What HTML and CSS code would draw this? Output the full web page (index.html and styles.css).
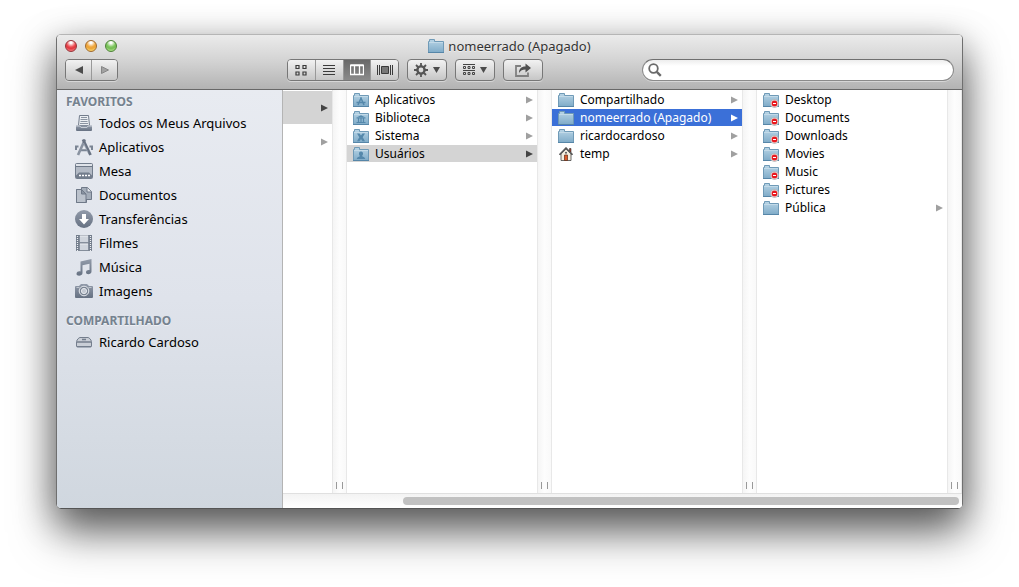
FILE: index.html
```html
<!DOCTYPE html>
<html lang="pt-BR">
<head>
<meta charset="utf-8">
<title>nomeerrado (Apagado)</title>
<link rel="stylesheet" href="styles.css">
</head>
<body>
<svg class="sprite" aria-hidden="true">
  <defs>
    <linearGradient id="folder-fill" x1="0" y1="0" x2="0" y2="1"><stop offset="0" stop-color="#b9d5e6"/><stop offset="1" stop-color="#7fabc8"/></linearGradient>
    <linearGradient id="side-fill" x1="0" y1="0" x2="0" y2="1"><stop offset="0" stop-color="#929baa"/><stop offset="1" stop-color="#667182"/></linearGradient>
    <symbol id="folder" viewBox="0 0 16 16">
      <path d="M.5 14.500V3.500H1.500V1.500H6.500V3.500H15.500V14.500Z" fill="url(#folder-fill)" stroke="#6f9ab7"/>
      <path d="M1 4.500H15" stroke="#c3dae8"/><path d="M0 14.500H16" stroke="#5686a8"/>
    </symbol>
    <symbol id="folder-apps" viewBox="0 0 16 16"><use href="#folder"/><path d="M5 13 8.300 5.500M7.700 5.500 11 13M3.500 10.500h9" fill="none" stroke="#5588ab" stroke-width="1.500"/></symbol>
    <symbol id="folder-library" viewBox="0 0 16 16"><use href="#folder"/><path d="M3.500 7.500 8 5.200 12.500 7.500Z" fill="#5588ab"/><path d="M3.500 12.500h9M3.500 8h9M5.500 8v4M8 8v4M10.500 8v4" stroke="#5588ab" stroke-width="1.200"/></symbol>
    <symbol id="folder-system" viewBox="0 0 16 16"><use href="#folder"/><path d="M4 5.500h2.500L8 7.500l1.500-2H12L9.700 9.300 12 13.200H9.500L8 11l-1.500 2.200H4l2.300-3.900Z" fill="#5588ab"/></symbol>
    <symbol id="folder-users" viewBox="0 0 16 16"><use href="#folder"/><path d="M8 5.500c1.500 0 2.200 1 2 2.500-.1 1-.6 1.400-.9 2 .1.900 2.900.8 3.100 2.900H3.800c.2-2.100 3-2 3.100-2.900-.3-.6-.8-1-.9-2-.2-1.500.5-2.500 2-2.500Z" fill="#5588ab"/></symbol>
    <symbol id="folder-denied" viewBox="0 0 16 16"><use href="#folder"/><circle cx="11.500" cy="11.500" r="4" fill="#f6f6f6" stroke="#a7a7a7" stroke-width=".8"/><circle cx="11.500" cy="11.500" r="2.900" fill="#e8191e"/><path d="M10 11.500h3" stroke="#fff" stroke-width="1.200"/></symbol>
    <symbol id="home" viewBox="0 0 16 16">
      <path d="M11.500 2.500h1.500v4h-1.500Z" fill="#a93f2b" stroke="#333" stroke-width=".6"/>
      <path d="M3 8 8 3l5 5v6.500H3Z" fill="#f6efe0" stroke="#444" stroke-width=".8"/>
      <path d="M1.500 8.700 8 2.200l6.500 6.500" fill="none" stroke="#333" stroke-width="1.600"/><path d="M2 8.500 8 2.500l6 6" fill="none" stroke="#ccc" stroke-width=".5"/>
      <path d="M6.500 9h3v5.500h-3Z" fill="#dd5b2b" stroke="#5a2c18" stroke-width=".7"/><circle cx="8" cy="6.700" r="1" fill="#555"/>
    </symbol>
    <symbol id="arrow" viewBox="0 0 7 8"><path d="M0 .5 7 4 0 7.500Z" fill="currentColor"/></symbol>
    <symbol id="all-files" viewBox="0 0 18 18"><path d="M4.500 1.500h9l1 10h-11Z" fill="#eceff3" stroke="#737d8c"/><path d="M6 3.500h6M5.500 5.500h7M5.500 7.500h7M5 9.500h8" stroke="#8b94a2"/><path d="M1 11.500h16V16a1 1 0 0 1-1 1H2a1 1 0 0 1-1-1Z" fill="url(#side-fill)"/><path d="M1 12h4l1 1.500h6l1-1.500h4" fill="none" stroke="#c6ccd5"/></symbol>
    <symbol id="apps" viewBox="0 0 18 18"><path d="M1 12V8.500h2.500M17 12V8.500h-2.500M5 12.200h8" fill="none" stroke="#7b8594" stroke-width="2"/><path d="M3 17 10 1.500" stroke="#8a93a1" stroke-width="2.600"/><path d="M8 1.500 15.500 17" stroke="#697383" stroke-width="2.800"/><path d="m8.500 5 4.500 9.500" stroke="#aab2be" stroke-width=".7"/></symbol>
    <symbol id="desk" viewBox="0 0 18 18"><rect x=".5" y="1.500" width="17" height="15" rx="1" fill="#b3bac5" stroke="#727d8c"/><path d="M1 4.500h16" stroke="#6d7786"/><path d="M1 3h16" stroke="#dfe3e9" stroke-width="2"/><path d="M4 10.500h10l3 3V16H1v-2.500Z" fill="#737d8c"/><path d="M4 13.500h2m1 0h2m1 0h2m1 0h2" stroke="#fff" stroke-width="1.500"/></symbol>
    <symbol id="docs" viewBox="0 0 18 18"><path d="M1.500 3.500h6l4 4v9h-10Z" fill="#cbd0d9" stroke="#6f7988"/><path d="M6.500 1.500h6l4 4v8h-10Z" fill="#a4adb9" stroke="#6f7988"/><path d="M12 1.500v4.500h4.500" fill="#e5e8ed" stroke="#6f7988"/><path d="M1.500 3.500h5l4.500 4.500v8.500h-9.500Z" fill="#bbc2cc" stroke="#6f7988"/><path d="M6.500 3.500v4.500h4.500Z" fill="#8a94a2" stroke="#6f7988"/></symbol>
    <symbol id="download" viewBox="0 0 18 18"><circle cx="9" cy="9" r="9" fill="url(#side-fill)"/><path d="M7 4h4v5h3l-5 5.500L4 9h3Z" fill="#fff"/></symbol>
    <symbol id="film" viewBox="0 0 18 18"><rect x="1" y="1" width="16" height="16" fill="#727c8b"/><path d="M4.500 1.500h9v7h-9zM4.500 9.500h9v7h-9z" fill="#cfd4dc" stroke="#727c8b" stroke-width=".6"/><path d="M5 2h8M5 10h8" stroke="#eceef2"/><path d="M2.500 2v15M15.500 2v15" stroke="#eef0f4" stroke-width="1.200" stroke-dasharray="1 1"/></symbol>
    <symbol id="music" viewBox="0 0 18 18"><path d="M5.500 3.500 16.500 1v12.500c0 3.300-5.500 3.800-5.500.8 0-2 2-2.600 3.500-2.200V5.700L7.500 7.300V15c0 3.300-6 3.800-6 .8 0-2 2.300-2.800 4-2.300Z" fill="url(#side-fill)"/></symbol>
    <symbol id="camera" viewBox="0 0 18 18"><path d="M1 4h3l2-2h6l2 2h3a1 1 0 0 1 1 1v10a1 1 0 0 1-1 1H1a1 1 0 0 1-1-1V5a1 1 0 0 1 1-1Z" fill="url(#side-fill)"/><path d="M1.500 5.500h3M13.500 5.500h3" stroke="#c0c6cf"/><circle cx="9" cy="9" r="4.800" fill="#7b8594" stroke="#e5e8ed"/><circle cx="9" cy="9" r="2.600" fill="#c5cad3" stroke="#e5e8ed"/></symbol>
    <symbol id="computer" viewBox="0 0 18 18"><path d="M1.500 8.500C2 6.500 4 4.500 5 4.500h8c1 0 3 2 3.500 4V13a1 1 0 0 1-1 1h-13a1 1 0 0 1-1-1Z" fill="#c9ced6" stroke="#747e8d"/><path d="M2 9h14" stroke="#747e8d" stroke-width="1.500"/><path d="M2 13.500h14" stroke="#747e8d"/><path d="M7 6.500h4" stroke="#747e8d" stroke-width="1.500"/></symbol>
  </defs>
</svg>

<main class="window">
  <header class="toolbar">
    <div class="titlebar">
      <div class="lights">
        <button class="light red" aria-label="Fechar"></button>
        <button class="light amber" aria-label="Minimizar"></button>
        <button class="light green" aria-label="Ampliar"></button>
      </div>
      <h1 class="title"><svg class="icon"><use href="#folder"/></svg>nomeerrado (Apagado)</h1>
    </div>
    <div class="controls">
      <div class="group nav">
        <button class="tool" aria-label="Voltar"><svg width="8" height="8" viewBox="0 0 8 8"><path d="M8 0 0 4 8 8Z" fill="#4c4c4c"/></svg></button>
        <button class="tool" aria-label="Avançar"><svg width="8" height="8" viewBox="0 0 8 8"><path d="M.5.500 7.500 4 .5 7.500Z" fill="#a2a2a2" stroke="#868686"/></svg></button>
      </div>
      <div class="group views">
        <button class="tool" aria-label="Ícones"><svg width="12" height="12" viewBox="0 0 12 12" fill="none" stroke="#3b3b3b"><path d="M1 1.500h3v3H1zM8 1.500h3v3H8zM1 8h3v3H1zM8 8h3v3H8z" stroke-width="1.200"/></svg></button>
        <button class="tool" aria-label="Lista"><svg width="12" height="12" viewBox="0 0 12 12" stroke="#3b3b3b"><path d="M0 1.500h12M0 4.500h12M0 7.500h12M0 10.500h12"/></svg></button>
        <button class="tool active" aria-label="Colunas" aria-pressed="true"><svg width="14" height="12" viewBox="0 0 14 12" stroke="#fff" fill="none"><path d="M.5 1.500h13v9H.5zM4.500 1v10M9.500 1v10M.5 1h13" stroke-width="1.300"/></svg></button>
        <button class="tool" aria-label="Cover Flow"><svg width="16" height="12" viewBox="0 0 16 12" stroke="#3b3b3b"><path d="M.5 1v10M2.500 1v10M13.500 1v10M15.500 1v10" fill="none"/><path d="M4.500 2.500h7v7h-7z" fill="#777"/></svg></button>
      </div>
      <button class="group tool menu" aria-label="Ação"><svg width="14" height="14" viewBox="0 0 14 14" fill="none" stroke="#555"><circle cx="7" cy="7" r="3.600" stroke-width="2.400"/><path d="M7 0v3M7 11v3M0 7h3M11 7h3M2 2l2 2M10 10l2 2M12 2l-2 2M4 10l-2 2" stroke-width="1.800"/></svg><svg width="7" height="6" viewBox="0 0 7 6"><path d="M0 0h7L3.500 6Z" fill="#4c4c4c"/></svg></button>
      <button class="group tool menu" aria-label="Organizar"><svg width="12" height="12" viewBox="0 0 12 12" fill="none" stroke="#444"><path d="M0 .5h12M0 6.500h12"/><path d="M.5 2.500h2v2h-2zM5 2.500h2v2H5zM9.500 2.500h2v2h-2zM.5 8.500h2v2h-2zM5 8.500h2v2H5zM9.500 8.500h2v2h-2z"/></svg><svg width="7" height="6" viewBox="0 0 7 6"><path d="M0 0h7L3.500 6Z" fill="#4c4c4c"/></svg></button>
      <button class="group tool menu" aria-label="Compartilhar"><svg width="16" height="14" viewBox="0 0 16 14"><path d="M6 3H1v10h12V9.500" fill="none" stroke="#808080" stroke-width="1.800"/><path d="M4 10c0-4 2-6.500 6.500-6.500V.5L16 5l-5.500 4.500v-3C7.500 6.500 5.500 7.500 4 10Z" fill="#505050"/></svg></button>
      <label class="search">
        <svg width="14" height="14" viewBox="0 0 14 14" fill="none" stroke="#6a6a6a"><circle cx="5.500" cy="5.500" r="4.300" stroke-width="1.800"/><path d="m8.800 8.800 4 4" stroke-width="2.400"/></svg>
        <input type="text" aria-label="Buscar">
      </label>
    </div>
  </header>

  <div class="content">
    <nav class="sidebar">
      <h2 class="heading">FAVORITOS</h2>
      <ul class="places">
        <li><a class="place" href="#"><svg><use href="#all-files"/></svg>Todos os Meus Arquivos</a></li>
        <li><a class="place" href="#"><svg><use href="#apps"/></svg>Aplicativos</a></li>
        <li><a class="place" href="#"><svg><use href="#desk"/></svg>Mesa</a></li>
        <li><a class="place" href="#"><svg><use href="#docs"/></svg>Documentos</a></li>
        <li><a class="place" href="#"><svg><use href="#download"/></svg>Transferências</a></li>
        <li><a class="place" href="#"><svg><use href="#film"/></svg>Filmes</a></li>
        <li><a class="place" href="#"><svg><use href="#music"/></svg>Música</a></li>
        <li><a class="place" href="#"><svg><use href="#camera"/></svg>Imagens</a></li>
      </ul>
      <h2 class="heading">COMPARTILHADO</h2>
      <ul class="places">
        <li><a class="place" href="#"><svg><use href="#computer"/></svg>Ricardo Cardoso</a></li>
      </ul>
    </nav>

    <section class="browser">
      <div class="columns">
        <div class="column first">
          <ul class="list">
            <li><a class="row tall current" href="#" aria-label="Disco"><svg class="arrow"><use href="#arrow"/></svg></a></li>
            <li><a class="row tall" href="#" aria-label="Rede"><svg class="arrow"><use href="#arrow"/></svg></a></li>
          </ul>
          <div class="gutter"></div>
        </div>
        <div class="column">
          <ul class="list">
            <li><a class="row" href="#"><svg class="icon"><use href="#folder-apps"/></svg>Aplicativos<svg class="arrow"><use href="#arrow"/></svg></a></li>
            <li><a class="row" href="#"><svg class="icon"><use href="#folder-library"/></svg>Biblioteca<svg class="arrow"><use href="#arrow"/></svg></a></li>
            <li><a class="row" href="#"><svg class="icon"><use href="#folder-system"/></svg>Sistema<svg class="arrow"><use href="#arrow"/></svg></a></li>
            <li><a class="row current" href="#"><svg class="icon"><use href="#folder-users"/></svg>Usuários<svg class="arrow"><use href="#arrow"/></svg></a></li>
          </ul>
          <div class="gutter"></div>
        </div>
        <div class="column">
          <ul class="list">
            <li><a class="row" href="#"><svg class="icon"><use href="#folder"/></svg>Compartilhado<svg class="arrow"><use href="#arrow"/></svg></a></li>
            <li><a class="row selected" href="#"><svg class="icon"><use href="#folder"/></svg>nomeerrado (Apagado)<svg class="arrow"><use href="#arrow"/></svg></a></li>
            <li><a class="row" href="#"><svg class="icon"><use href="#folder"/></svg>ricardocardoso<svg class="arrow"><use href="#arrow"/></svg></a></li>
            <li><a class="row" href="#"><svg class="icon"><use href="#home"/></svg>temp<svg class="arrow"><use href="#arrow"/></svg></a></li>
          </ul>
          <div class="gutter"></div>
        </div>
        <div class="column">
          <ul class="list">
            <li><a class="row" href="#"><svg class="icon"><use href="#folder-denied"/></svg>Desktop</a></li>
            <li><a class="row" href="#"><svg class="icon"><use href="#folder-denied"/></svg>Documents</a></li>
            <li><a class="row" href="#"><svg class="icon"><use href="#folder-denied"/></svg>Downloads</a></li>
            <li><a class="row" href="#"><svg class="icon"><use href="#folder-denied"/></svg>Movies</a></li>
            <li><a class="row" href="#"><svg class="icon"><use href="#folder-denied"/></svg>Music</a></li>
            <li><a class="row" href="#"><svg class="icon"><use href="#folder-denied"/></svg>Pictures</a></li>
            <li><a class="row" href="#"><svg class="icon"><use href="#folder"/></svg>Pública<svg class="arrow"><use href="#arrow"/></svg></a></li>
          </ul>
          <div class="gutter"></div>
        </div>
      </div>
      <div class="scrollbar"><div class="thumb"></div></div>
    </section>
  </div>
</main>
</body>
</html>
```
FILE: styles.css
```css
* { box-sizing: border-box; }

body {
  display: flex;
  min-height: 100vh;
  margin: 0;
  padding: 34px 56px 78px;
  background: #fff;
  color: #000;
  font: 12px/17px "Noto Sans", "Open Sans", sans-serif;
}

.sprite { position: absolute; width: 0; height: 0; }
ul { margin: 0; padding: 0; list-style: none; }
a { color: inherit; text-decoration: none; }
button { margin: 0; padding: 0; border: 0; font: inherit; }
svg { display: block; flex: none; }

.window {
  display: flex;
  flex: 1;
  flex-direction: column;
  min-width: 0;
  overflow: hidden;
  border: 1px solid #6f6f6f;
  border-top-color: #b5b5b5;
  border-bottom-color: #555;
  border-radius: 5px;
  box-shadow: 0 24px 44px rgba(0, 0, 0, .5), 0 10px 36px rgba(0, 0, 0, .35);
}

.toolbar {
  padding-bottom: 8px;
  border-bottom: 1px solid #686868;
  background: linear-gradient(#ebebeb, #d2d2d2 50%, #b3b3b3);
}

.titlebar {
  display: grid;
  grid-template-columns: 1fr auto 1fr;
  align-items: center;
  height: 24px;
  padding: 0 8px 2px;
}

.lights { display: flex; gap: 8px; }
.light {
  width: 12px;
  height: 12px;
  border: 1px solid;
  border-radius: 50%;
}
.red { border-color: #963238; background: radial-gradient(circle at 50% 15%, #fff 0 10%, #ed5055 45%, #e0363e 60%, #ff9b9b); }
.amber { border-color: #a0682c; background: radial-gradient(circle at 50% 15%, #fff 0 10%, #f0a840 45%, #eda436 60%, #fff08c); }
.green { border-color: #4c8136; background: radial-gradient(circle at 50% 15%, #fff 0 10%, #80c860 45%, #74bd54 60%, #cdf6a4); }

.title {
  display: flex;
  align-items: center;
  gap: 4px;
  margin: 0;
  color: #333;
  font-size: 13px;
  font-weight: 400;
  text-shadow: 0 1px #fff8;
}

.icon { width: 16px; height: 16px; }

.controls { display: flex; gap: 8px; padding: 0 8px; }

.group {
  display: flex;
  height: 22px;
  overflow: hidden;
  border: 1px solid #777;
  border-radius: 4px;
  box-shadow: 0 1px #fff6;
}
.tool {
  display: flex;
  align-items: center;
  justify-content: center;
  background: linear-gradient(#f2f2f2, #c6c6c6);
}
.group .tool { flex: 1; }
.group .tool + .tool { border-left: 1px solid #999; }
.nav { width: 53px; }
.views { width: 112px; margin-left: 161px; }
.menu { gap: 5px; width: 40px; }
.group .active { background: linear-gradient(#696969, #8a8a8a); }

.search {
  display: flex;
  align-items: center;
  gap: 4px;
  width: 312px;
  height: 22px;
  margin-left: auto;
  padding: 0 8px 0 5px;
  border: 1px solid #8b8b8b;
  border-top-color: #6f6f6f;
  border-radius: 11px;
  background: linear-gradient(#ededed, #fff 6px);
  box-shadow: 0 1px #fff6;
}
.search input {
  flex: 1;
  min-width: 0;
  padding: 0;
  border: 0;
  outline: 0;
  background: none;
  font: inherit;
}

.content { display: flex; flex: 1; min-height: 0; }

.sidebar {
  flex: none;
  width: 226px;
  border-right: 1px solid #b4b4b4;
  background: linear-gradient(#e8ebf1, #dfe3eb 50%, #d0d7df);
}
.heading {
  margin: 0;
  padding: 2px 9px 0;
  color: #75828f;
  font-size: 12px;
  font-weight: 700;
  line-height: 19px;
  text-shadow: 0 1px #fff8;
}
.places + .heading { margin-top: 6px; }
.place {
  display: flex;
  align-items: center;
  gap: 6px;
  height: 24px;
  padding-left: 18px;
  font-size: 13px;
}
.place svg { width: 18px; height: 18px; }

.browser { display: flex; flex: 1; flex-direction: column; min-width: 0; background: #fff; }
.columns { display: flex; flex: 1; min-height: 0; }
.column { display: flex; flex: 0 0 205px; }
.first { flex: 1; min-width: 0; }
.list {
  display: flex;
  flex: 1;
  flex-direction: column;
  gap: 1px;
  min-width: 0;
  padding-top: 1px;
}
.row {
  display: flex;
  align-items: center;
  gap: 6px;
  height: 17px;
  padding: 0 4px 0 6px;
  white-space: nowrap;
}
.tall { height: 33px; }
.arrow { width: 7px; height: 8px; margin-left: auto; color: #a0a0a0; }
.current { background: #d4d4d4; }
.current .arrow { color: #444; }
.selected { background: #3b70d8; color: #fff; }
.selected .arrow { color: #fff; }

.gutter {
  display: flex;
  align-items: flex-end;
  justify-content: center;
  width: 15px;
  padding-bottom: 4px;
  border: solid #e8e8e8;
  border-width: 0 1px;
  background: linear-gradient(90deg, #f5f5f5, #fdfdfd 50%, #f9f9f9);
}
.gutter::after {
  width: 5px;
  height: 7px;
  border: solid #999;
  border-width: 0 1px;
  content: "";
}

.scrollbar {
  height: 15px;
  padding: 3px 3px 0 120px;
  border-top: 1px solid #e0e0e0;
  background: linear-gradient(#f3f3f3, #fff);
}
.thumb { height: 8px; border-radius: 4px; background: #c1c1c1; }
```
